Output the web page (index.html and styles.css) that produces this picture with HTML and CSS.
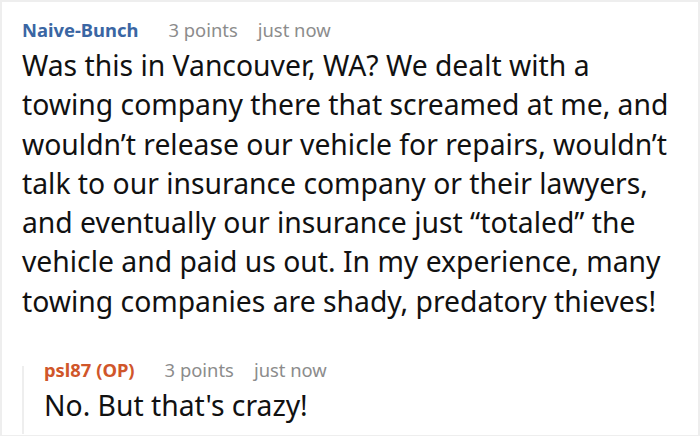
FILE: index.html
```html
<!DOCTYPE html>
<html>
<head>
<meta charset="utf-8">
<link rel="stylesheet" href="styles.css">
</head>
<body>
<div class="card">
  <div class="comment">
    <div class="meta">
      <span class="author">Naive-Bunch</span>
      <span class="info">3 points</span>
      <span class="info">just now</span>
    </div>
    <div class="body">Was this in Vancouver, WA? We dealt with a<br>towing company there that screamed at me, and<br>wouldn’t release our vehicle for repairs, wouldn’t<br>talk to our insurance company or their lawyers,<br>and eventually our insurance just “totaled” the<br>vehicle and paid us out. In my experience, many<br>towing companies are shady, predatory thieves!</div>
  </div>
  <div class="reply">
    <div class="thread-line"></div>
    <div class="reply-content">
      <div class="meta">
        <span class="author op">psl87 (OP)</span>
        <span class="info">3 points</span>
        <span class="info">just now</span>
      </div>
      <div class="body">No. But that's crazy!</div>
    </div>
  </div>
</div>
</body>
</html>
```
FILE: styles.css
```css
html, body {
  margin: 0;
  padding: 0;
  background: #fff;
}
.card {
  width: 700px;
  height: 436px;
  box-sizing: border-box;
  border: 2px solid #eeeeee;
  border-bottom-width: 1px;
  font-family: "Noto Sans", sans-serif;
  color: #111;
  overflow: hidden;
  display: flex;
  flex-direction: column;
  padding: 14px 6px 0 20px;
}
.meta {
  display: flex;
  gap: 20px;
  font-size: 18.4px;
  line-height: 28px;
  white-space: nowrap;
}
.author {
  font-weight: bold;
  color: #3a66a3;
  margin-right: 10px;
}
.author.op {
  color: #d0562a;
}
.info {
  color: #8c8c8c;
}
.info + .info {
  margin-left: 0;
}
.body {
  font-size: 28.3px;
  line-height: 39.3px;
  margin-top: 2px;
  white-space: nowrap;
}
.reply {
  flex: 1;
  display: flex;
  margin-top: 35px;
}
.thread-line {
  width: 2px;
  background: #eeeeee;
  margin-top: 10px;
  margin-bottom: 1px;
  flex: none;
}
.reply-content {
  margin-left: 20px;
}
```
